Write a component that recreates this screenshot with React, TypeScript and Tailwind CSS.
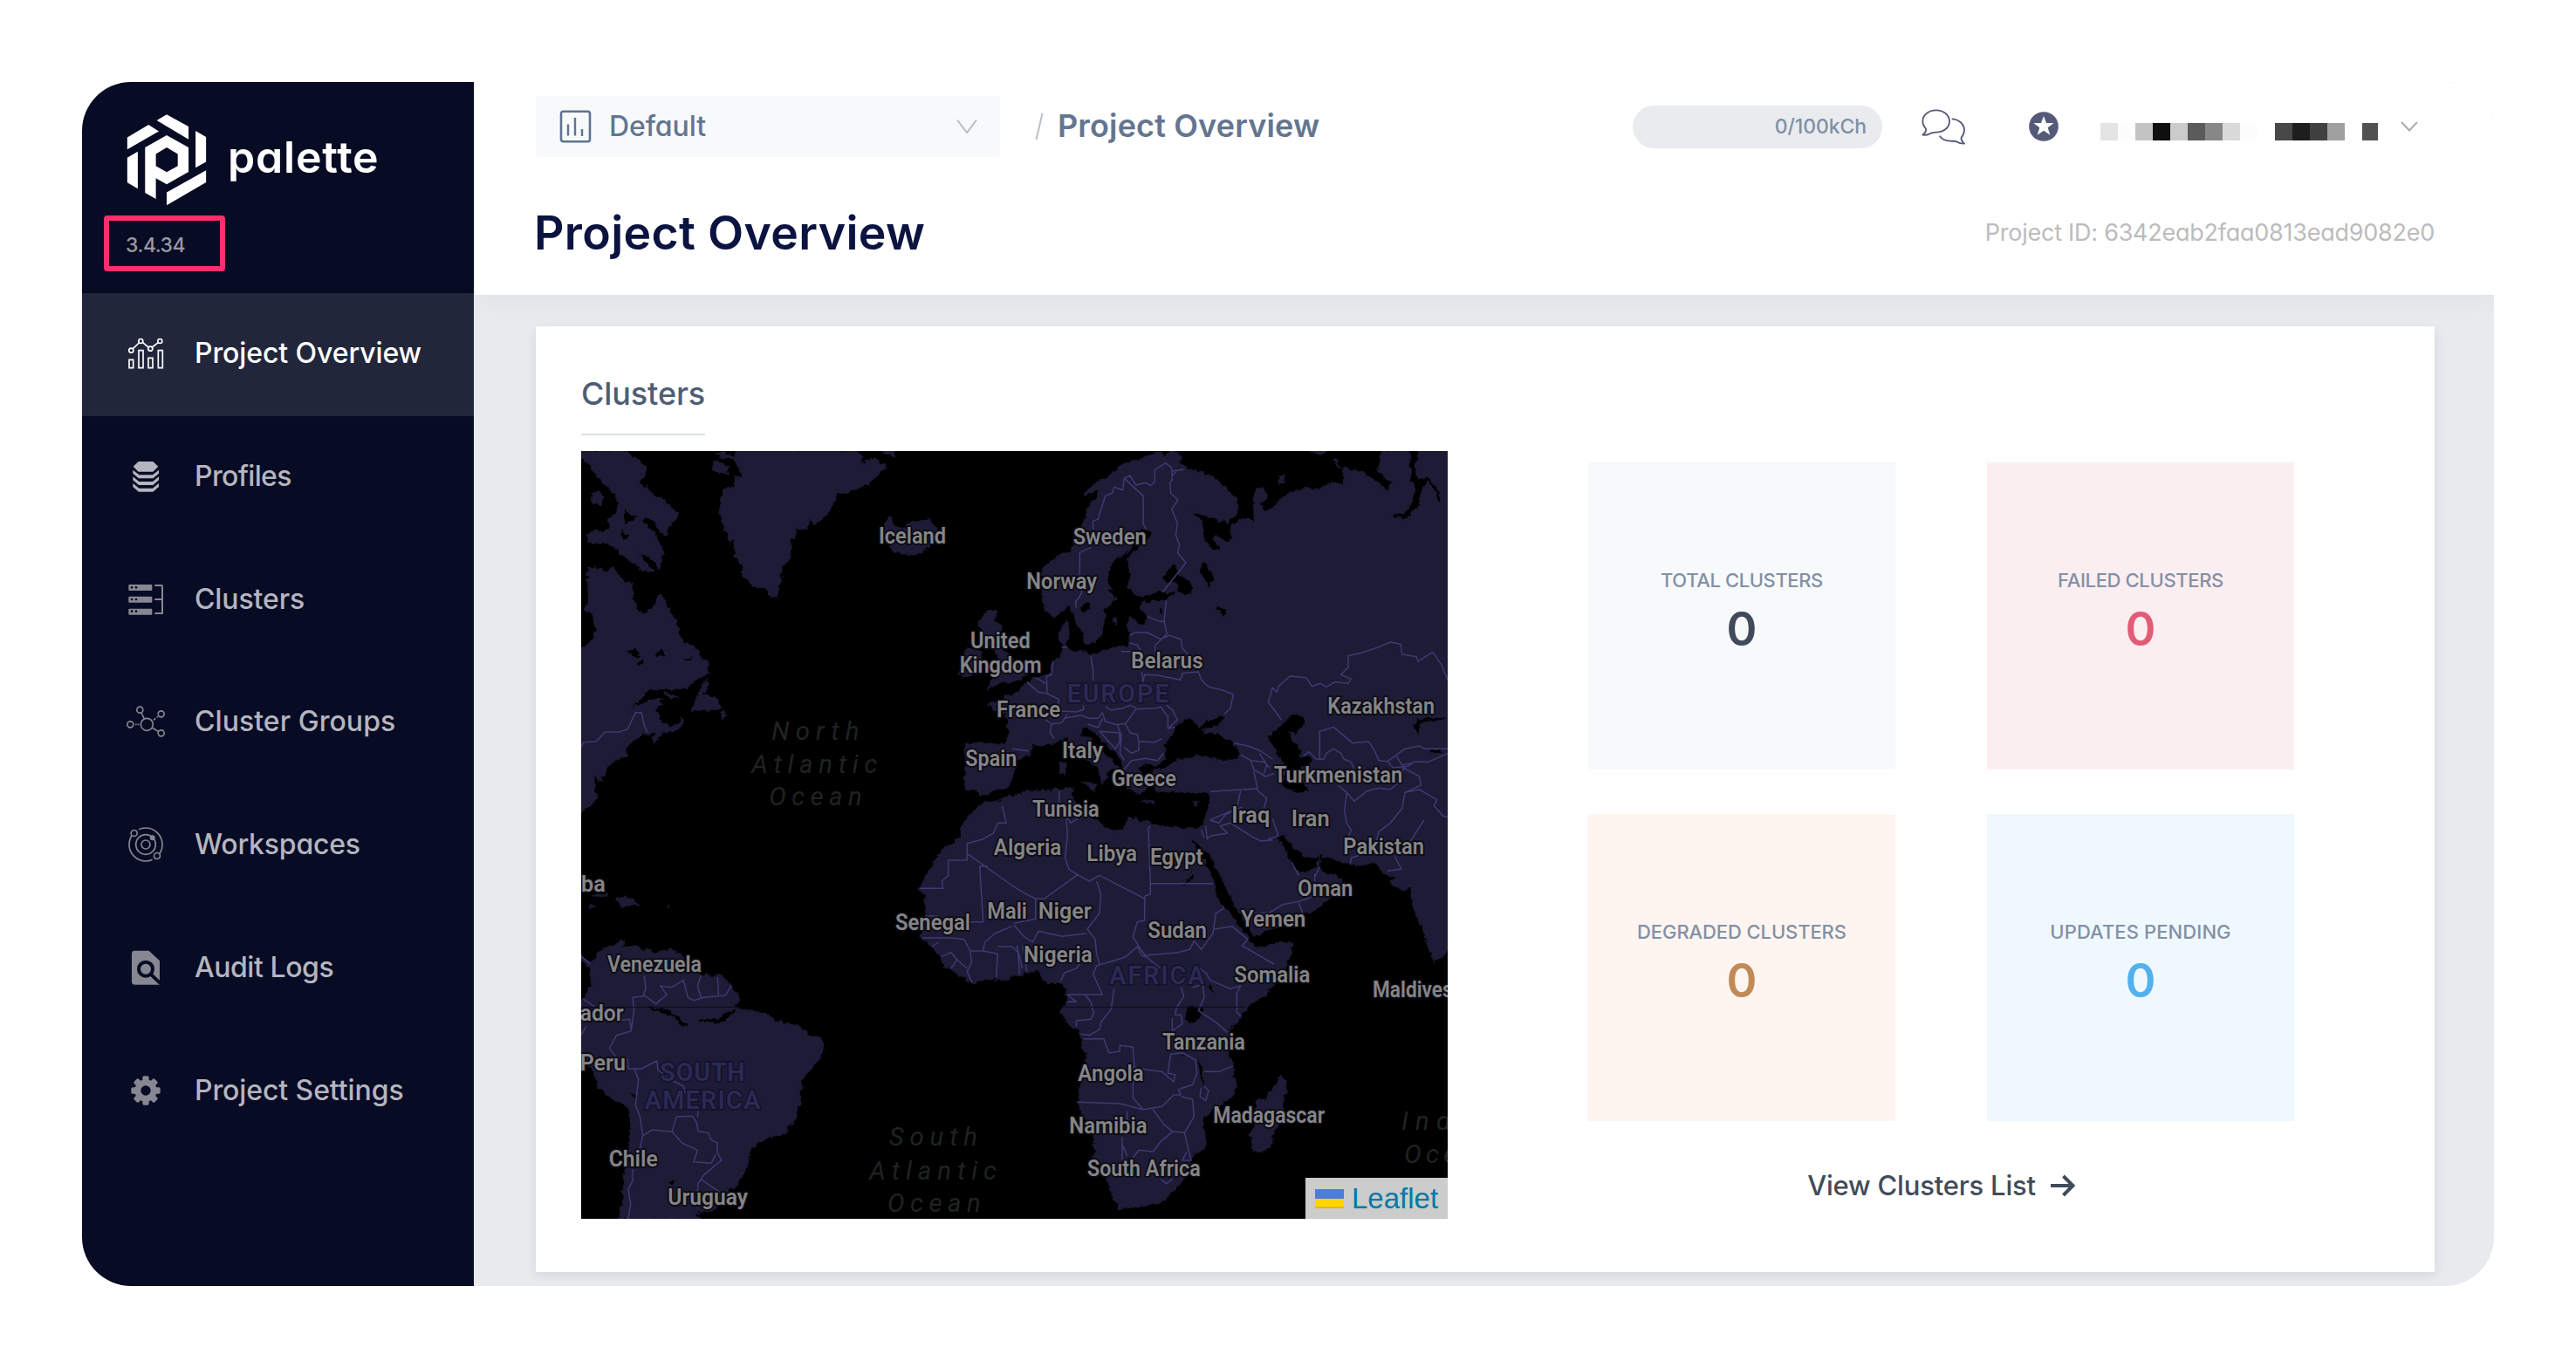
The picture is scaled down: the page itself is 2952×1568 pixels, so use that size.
import type { ReactNode } from "react";

const navIcons = {
  overview: (
    <svg viewBox="189 906 144 144" className="mb-[3px] size-12" fill="none" stroke="#fff" strokeWidth="5">
      <path d="M217 962 238 942M251 941 270 957M283 957 304 941" />
      <circle cx="211" cy="968" r="7.5" />
      <circle cx="244" cy="936" r="7.5" />
      <circle cx="277" cy="962" r="7.5" />
      <circle cx="310" cy="936" r="7.5" />
      <path d="M204 1000h14v28h-14zM237 968h15v60h-15zM270 994h15v34h-15zM304 968h15v60h-15z" />
    </svg>
  ),
  profiles: (
    <svg viewBox="189 130 144 144" className="mb-[3px] size-12" fill="#b5b5c1">
      <path d="M218 168 236 151H286L304 168 286 186H236Z" />
      <path d="M217 180 238 197H285L306 180V192L286 209H237L217 192Z" />
      <path d="M217 203 238 220H285L306 203V215L286 232H237L217 215Z" />
      <path d="M217 226 238 243H285L306 226V238L286 255H237L217 238Z" />
    </svg>
  ),
  clusters: (
    <svg viewBox="189 552 144 144" className="mb-[3px] size-12" fill="#878793">
      <rect x="202" y="573" width="81" height="21" rx="3" />
      <rect x="202" y="614" width="81" height="21" rx="3" />
      <rect x="202" y="656" width="81" height="21" rx="3" />
      <g fill="#070b24">
        <circle cx="213" cy="583" r="4" />
        <circle cx="228" cy="583" r="4" />
        <circle cx="213" cy="624" r="4" />
        <circle cx="228" cy="624" r="4" />
        <circle cx="213" cy="665" r="4" />
        <circle cx="228" cy="665" r="4" />
      </g>
      <path d="M292 576H315Q318 576 318 579V672H292M292 624H318" fill="none" stroke="#878793" strokeWidth="6" />
    </svg>
  ),
  groups: (
    <svg viewBox="189 976 144 144" className="mb-[3px] size-12" fill="none" stroke="#878793" strokeWidth="5">
      <circle cx="265" cy="1058" r="21" />
      <circle cx="241" cy="1008" r="10.5" />
      <circle cx="314" cy="1022" r="10.5" />
      <circle cx="208" cy="1058" r="10.5" />
      <circle cx="314" cy="1088" r="10.5" />
      <path d="M246 1018 256 1039M283 1070 304 1082M288 1043 295 1037M299 1034 303 1031M225 1058H230M233 1058H238" />
    </svg>
  ),
  workspaces: (
    <svg viewBox="189 197 144 144" className="mb-[3px] size-12" fill="none" stroke="#878793" strokeWidth="5">
      <circle cx="261" cy="269" r="57" />
      <circle cx="261" cy="269" r="34" />
      <circle cx="261" cy="269" r="15" />
      <path d="M229 219 236 215M291 319 284 322" stroke="#070b24" strokeWidth="9" />
      <circle cx="221" cy="230" r="10.5" fill="#070b24" />
      <circle cx="300" cy="308" r="10.5" fill="#070b24" />
      <circle cx="284" cy="246" r="9" fill="#878793" stroke="none" />
    </svg>
  ),
  audit: (
    <svg viewBox="189 619 144 144" className="mb-[3px] size-12">
      <path d="M223 633H272L309 668V750H223Q213 750 213 740V643Q213 633 223 633Z" fill="#878793" />
      <circle cx="261" cy="696" r="24" fill="none" stroke="#070b24" strokeWidth="12" />
      <path d="M278 714 312 746" stroke="#070b24" strokeWidth="12" />
    </svg>
  ),
  settings: (
    <svg viewBox="-72 -72 144 144" className="mb-[3px] size-12" fill="#878793">
      {[0, 45, 90, 135].map((a) => (
        <rect key={a} x="-11" y="-50" width="22" height="100" rx="5" transform={`rotate(${a})`} />
      ))}
      <circle r="38" />
      <circle r="17" fill="#070b24" />
    </svg>
  ),
};

const nav: { label: string; icon: ReactNode; cls: string }[] = [
  { label: "Project Overview", icon: navIcons.overview, cls: "bg-[#22263b] text-white tracking-[-0.1px]" },
  { label: "Profiles", icon: navIcons.profiles, cls: "text-[#b5b5bf] tracking-[-0.65px]" },
  { label: "Clusters", icon: navIcons.clusters, cls: "text-[#b5b5bf] tracking-[-0.1px]" },
  { label: "Cluster Groups", icon: navIcons.groups, cls: "text-[#b5b5bf] tracking-[0.05px]" },
  { label: "Workspaces", icon: navIcons.workspaces, cls: "text-[#b5b5bf] tracking-[-0.2px]" },
  { label: "Audit Logs", icon: navIcons.audit, cls: "text-[#b5b5bf] tracking-[-0.45px]" },
  { label: "Project Settings", icon: navIcons.settings, cls: "text-[#b5b5bf] tracking-[-0.1px]" },
];

function Logo() {
  return (
    <svg viewBox="190 150 280 320" className="h-[107px] w-[94px]" fill="#fff">
      <path d="M296 174 330 154 405 195V239ZM195 232 268 189 303 211 195 273ZM195 302 231 281V408L195 387ZM429 210 465 231V316L429 336ZM330 421 465 345V386L330 465Z" />
      <path fillRule="evenodd" d="M256 267 330 225 405 267V350L330 393 293 372V443L256 422ZM293 289V330L330 351 368 330V289L330 267Z" />
    </svg>
  );
}

function Sidebar() {
  return (
    <aside className="flex w-[449px] flex-col bg-[#070b24]">
      <div className="h-[242px] pt-9 pl-[50px]">
        <div className="flex items-center">
          <Logo />
          <span className="pb-[8px] pl-[23px] text-[50px] leading-none font-semibold tracking-[0.8px] text-white">palette</span>
        </div>
        <div className="mt-[10px] ml-[-25px] flex h-16 w-[139px] items-center rounded-[4px] border-6 border-[#ff2e6c] pt-[5px] pl-[19px] text-[23px] font-medium tracking-[-0.5px] text-[#9898a4]">
          3.4.34
        </div>
      </div>
      <nav>
        {nav.map((n) => (
          <div key={n.label} className={`flex h-[140.85px] items-center pl-[49px] text-[32px] font-[450] ${n.cls}`}>
            {n.icon}
            <span className="pb-[3px] pl-[32px]">{n.label}</span>
          </div>
        ))}
      </nav>
    </aside>
  );
}

const mosaic = [
  "bg-[#e4e4e4]", "bg-[#fcfcfc]", "bg-[#c4c4c4]", "bg-[#0f0f0f]", "bg-[#cbcbcb]", "bg-[#5b5b5b]", "bg-[#878787]", "bg-[#dadada]",
  "bg-[#fcfcfc]", "bg-white", "bg-[#484848]", "bg-[#1e1e1e]", "bg-[#404040]", "bg-[#9f9f9f]", "bg-white", "bg-[#515151]",
];

function Header() {
  return (
    <header className="relative z-10 h-[244px] bg-white pt-4 pr-[68px] pl-[71px] shadow-[0_6px_30px_rgba(20,30,60,0.04)]">
      <div className="flex h-[70px] items-center">
        <div className="flex h-full w-[532px] items-center rounded-[4px] bg-[#f7f9fb] pr-[26px] pl-[27px]">
          <svg viewBox="0 0 37 38" className="h-[38px] w-[37px]" fill="none" stroke="#5f7391" strokeWidth="2.6">
            <rect x="2" y="1.8" width="33" height="34.4" rx="2.5" />
            <path d="M10 16.5V29.5M18 9V29.5M26 22V30" strokeWidth="2.4" />
          </svg>
          <span className="pb-[1px] pl-[20px] text-[32px] font-[450] tracking-[-0.1px] text-[#64758f]">Default</span>
          <svg viewBox="0 0 24 18" className="ml-auto h-[18px] w-6" fill="none" stroke="#b9bdc2" strokeWidth="2">
            <path d="M1 1.5 12 16 23 1.5" />
          </svg>
        </div>
        <svg viewBox="0 0 10 32" className="ml-[40px] h-8 w-[10px]" stroke="#b6bfca" strokeWidth="2">
          <path d="M1.5 31 8.5 1" />
        </svg>
        <span className="pb-[2px] pl-[16px] text-[36px] font-[580] tracking-[0.15px] text-[#64758f]">Project Overview</span>
        <div className="ml-auto flex h-[49px] w-[286px] items-center justify-end rounded-full bg-[#e9ebef] pr-[18px] text-[23px] font-medium tracking-[-0.1px] text-[#8090a5]">
          0/100kCh
        </div>
        <svg viewBox="127 70 150 126" className="ml-[45px] h-[42px] w-[50px]" fill="none" stroke="#565a79" strokeWidth="5.5" strokeLinejoin="round">
          <path d="M131 162C140 155 144 149 142 140 134 132 131 124 131 115 131 93 151 77 177 77S223 93 223 115 203 153 177 153C168 153 160 155 155 158 147 162 138 163 131 162Z" />
          <path d="M231 107C255 108 274 124 274 146 274 157 270 163 264 171 262 180 267 186 274 192 264 192 256 191 250 186 240 182 232 184 225 183 208 182 196 175 189 165" />
        </svg>
        <svg viewBox="-51 -51 102 102" className="ml-[73px] size-[34px]">
          <circle r="50.5" fill="#565a79" />
          <path d="M0-36 9-12H35L14 4 22 29 0 14-22 29-14 4-35-12H-9Z" fill="#fff" />
        </svg>
        <div className="mt-[11px] ml-[48px] flex h-5">
          {mosaic.map((c, i) => (
            <span key={i} className={`h-5 w-5 last:w-[18px] ${c}`} />
          ))}
        </div>
        <svg viewBox="0 0 20 12" className="mr-[19px] ml-[26px] h-3 w-5" fill="none" stroke="#a9adb3" strokeWidth="2">
          <path d="M1 1 10 10.5 19 1" />
        </svg>
      </div>
      <div className="flex h-[158px] items-center justify-between pt-[17px]">
        <h1 className="ml-[-2px] text-[53.5px] font-[580] tracking-[0.35px] text-[#0b1340]">Project Overview</h1>
        <span className="text-[27px] tracking-[-0.25px] text-[#bcbcbc]">Project ID: 6342eab2faa0813ead9082e0</span>
      </div>
    </header>
  );
}

// Map drawing units: one third of a CSS pixel, origin at (18, 21).
const land = [
  "M18 21H175L200 45 225 60 240 75 235 110 215 125 245 150 270 175 300 190 345 235V250L325 275 305 308 280 280 262 255 235 248 230 265 262 300 285 330 298 370 290 405 285 425 265 395 235 375 212 368 230 395 265 435 235 430 200 405 165 385 135 350 105 335 60 340 40 330 50 300 120 295 110 262 140 230 150 205 130 165 95 130 60 85 18 38Z",
  "M60 165 75 158 92 175 85 205 60 200Z",
  "M40 425H70L105 433 122 423 150 450 165 475 190 480 195 530 215 570 240 580 262 565 275 540 288 510 310 545 325 580 345 600 350 650 380 685 420 705 430 735 455 745V785L405 810 380 838H250L225 870 195 900 180 925 205 900 250 880 290 872 297 890 265 908 285 925 290 955 330 970 355 955 362 940 370 960 345 980 300 990 272 1020 262 1010 280 990H250L185 1020 172 1045 175 1065 130 1085 110 1105 100 1135H80L90 1160 65 1130V1180L72 1215 40 1250 18 1262V700L45 685 65 660 70 620 55 585 32 560 45 540Z",
  "M450 808 452 830 435 860 490 870 498 900 480 912H397L415 880 432 835Z",
  "M498 920H512L505 938Z",
  "M303 852 345 868 335 872Z",
  "M550 21H970L990 40 975 65 1030 50 1070 75 1010 130 930 165 900 160 895 175 862 240 820 275 805 250 790 290H755L750 320H735L740 370 720 410 700 415 705 450 690 520H675L650 490 610 485 580 450 570 410 545 380V345L550 325 530 330 520 300 500 255 497 190 510 155 545 145 550 105 572 112 560 75 545 50Z",
  "M485 30 530 30 545 50 510 45Z",
  "M475 55 525 75 520 100 475 85Z",
  "M1055 21H1095V40L1075 32Z",
  "M1062 280 1080 252 1100 285 1130 290 1150 265H1190L1210 252 1235 285 1245 320 1215 350 1160 378 1110 370 1080 355 1095 335 1060 300Z",
  "M1415 572 1447 575 1435 605 1465 620 1455 650 1440 665 1465 700 1490 720 1510 750 1540 770 1545 790 1500 815 1460 815 1410 840 1430 815 1460 790 1440 780 1455 750 1440 700 1400 660 1395 630 1380 610Z",
  "M1350 700 1390 710 1395 750 1375 785 1330 797 1315 785 1335 760 1330 735Z",
  // Eurasia and Africa, clockwise from southern Norway
  "M1605 560 1605 500 1630 480 1600 440 1620 410 1660 380 1700 370 1715 320 1745 270 1760 210 1790 180 1800 155 1750 168 1785 130 1830 110 1870 75 1940 48 2000 25 2020 40 2050 22 2080 40 2065 60 2100 80 2190 110 2240 155 2270 185 2275 230 2240 265 2200 255 2140 235 2112 222 2150 265 2155 320 2180 350 2205 367 2220 350 2190 325 2200 310 2235 335 2260 320 2250 285 2290 250 2335 260 2330 200 2335 150 2370 155 2375 180 2345 205 2370 230 2395 225 2410 195 2460 165 2500 150 2560 150 2600 130 2640 140 2640 80 2700 95 2760 130 2790 160 2800 130 2760 90 2770 21H2865V120L2885 145 2870 200 2850 235 2800 235 2810 250 2855 255 2900 210 2910 150 2930 130 2955 160 2960 190 2980 195 2960 140 2930 110 2895 115 2890 70 2900 21H3000V1730L2980 1760 2955 1775 2940 1750 2920 1690 2900 1640 2880 1590 2870 1510 2850 1530 2820 1520 2800 1500 2820 1490 2780 1470 2745 1435 2700 1445 2660 1440 2610 1430 2560 1405 2550 1420 2500 1410 2470 1380 2430 1340 2405 1350 2430 1380 2450 1420 2465 1460 2500 1470 2540 1460 2555 1425 2560 1470 2610 1480 2640 1510 2585 1560 2550 1595 2500 1610 2460 1640 2390 1665 2330 1690 2315 1660 2280 1610 2240 1530 2210 1470 2180 1410 2155 1385 2112 1348 2125 1380 2150 1415 2170 1460 2195 1510 2205 1570 2240 1600 2270 1645 2310 1695 2340 1735 2380 1720 2460 1710V1740L2430 1820 2370 1890 2310 1930 2280 1975 2245 2010 2240 2090 2255 2120 2260 2160 2268 2210 2255 2240 2200 2275 2150 2320 2165 2380 2160 2420 2120 2440 2090 2520 2060 2560 2010 2605 1930 2620 1870 2625 1845 2580 1830 2530 1785 2450 1780 2370 1725 2270 1730 2220 1750 2150 1755 2100 1740 2060 1730 2020 1690 1985 1670 1950 1685 1920 1690 1870 1665 1845 1620 1850 1590 1810 1510 1820 1480 1840 1420 1835 1360 1850 1300 1810 1265 1790 1255 1765 1225 1725 1190 1695 1185 1665 1205 1610 1200 1545 1180 1530 1205 1480 1230 1440 1265 1390 1325 1350V1320L1340 1290 1390 1240 1405 1228 1440 1230 1500 1205 1570 1190 1650 1185 1710 1180 1700 1210 1740 1270 1790 1290 1830 1325 1880 1330 1900 1280 1960 1300 2010 1310 2090 1320 2140 1320 2160 1300 2180 1230V1190L2140 1195 2070 1190 2000 1190 1980 1150 1990 1120 2040 1110 2050 1090 2090 1080 2150 1070 2220 1085 2270 1085 2285 1060 2260 1020 2200 990 2155 990 2165 975 2210 965 2240 925 2200 938 2150 960 2140 975 2125 945 2100 940 2065 965 2045 1000 2020 1040 2025 1080 2000 1100 1960 1095 1930 1110 1950 1140 1930 1150 1960 1180 1940 1200 1900 1180 1880 1110 1870 1070 1830 1040 1800 1000 1760 970H1740L1735 1005 1765 1010 1790 1040 1810 1060 1845 1085 1865 1120 1845 1112 1828 1115 1820 1150 1810 1160 1805 1125 1770 1090 1735 1060 1700 1025 1685 1005 1650 1020 1610 1030 1565 1030 1560 1060 1520 1080 1500 1120V1150L1480 1180 1440 1190 1400 1205 1375 1185 1340 1180 1335 1140 1345 1100 1335 1045 1350 1025 1475 1030 1490 1010 1487 960 1480 925 1430 905 1420 890 1475 880 1475 860 1500 868 1540 830 1580 800 1630 790 1640 745 1665 730 1672 700 1660 650 1690 605 1695 650 1680 690 1705 715 1740 710 1770 720 1800 715 1865 690 1900 695 1905 650 1895 620 1910 590 1935 620 1960 620 1965 590 1940 560 1950 545 2020 530 2060 515 2070 505 2000 505 1935 520 1900 490 1905 450 1900 395 1940 350 1970 325 1980 300 1950 285 1930 300 1915 345 1890 370 1845 400 1825 440 1830 490 1855 530 1820 560 1815 600 1805 650 1770 685 1750 680 1745 650 1715 600 1700 555 1690 550 1665 580 1640 588Z",
  "M2415 110 2435 100V125L2420 130ZM2605 50 2630 75 2618 72ZM2525 21H2580L2560 32Z",
  "M1742 1160 1790 1165 1785 1190ZM1665 1092 1685 1100 1680 1135 1665 1130ZM2120 1230 2145 1225 2130 1240ZM1945 1225H1985V1232ZM1848 600 1858 595 1850 620Z",
  "M2425 2168 2442 2200 2445 2230 2430 2240 2425 2290 2405 2350 2385 2410 2360 2430 2330 2425 2320 2370 2340 2320 2335 2260 2380 2240 2405 2200Z",
  "M165 1705 150 1760 165 1730 200 1722 230 1735 280 1748 300 1738 340 1740 365 1760 400 1800 430 1825H500L535 1860 562 1905 545 1940 600 1945 660 1960 680 1980 760 1995 800 2030 842 2035 850 2070 840 2105 800 2150 775 2185 770 2250 755 2310 720 2365 650 2385 600 2420 590 2480 560 2535 500 2590 480 2632 400 2640 430 2661H145L165 2590V2500L185 2420 190 2320 185 2280 100 2230 75 2200 60 2150 18 2120V1920L30 1900 55 1860 50 1800 18 1770V1758L55 1780 85 1740 120 1725Z",
  "M140 1558H190L215 1580 155 1588ZM52 1546H105V1550ZM40 1586H65V1589ZM318 1585H323V1590H318Z",
].join("");

const water = [
  "M165 220 210 250 165 275ZM155 290 182 312 165 335ZM178 712 205 698 222 735 190 725ZM270 725 290 700 318 730ZM375 735 402 730 380 745ZM217 745H229V757H217Z",
  "M2015 455 2060 410 2068 440 2090 455 2122 490 2110 515 2075 505 2060 470 2030 475ZM2150 405 2170 410 2190 460 2175 487 2150 440ZM2205 550 2235 575 2230 588 2203 570ZM1735 560 1768 538 1765 565 1740 578Z",
  "M2005 560H2018V580H2010Z",
  "M2380 1000 2430 960 2460 930 2505 935V960L2475 995 2450 985 2465 1020 2495 1050 2490 1070 2530 1075 2530 1095 2490 1110 2500 1160 2520 1190 2480 1193 2440 1180 2425 1160 2445 1120 2430 1090 2400 1040Z",
  "M2880 960 2905 940 2980 938 2990 942 2905 955 2895 990ZM2930 1050 2970 1045 2975 1058 2940 1060Z",
  "M2100 1935 2140 1930 2155 1940 2135 1980 2105 1990 2095 1970ZM2140 2110 2155 2140 2150 2170 2165 2205 2150 2190 2142 2150ZM2178 1850 2195 1885 2182 1875ZM2120 1470 2125 1490 2090 1515 2105 1490Z",
  "M245 1935 310 1940 355 1970 385 2000 360 1992 330 1965 270 1945ZM425 1975 490 1970 530 1945 550 1945 500 1985 430 1985ZM185 2225 210 2240 205 2250ZM320 2530 340 2530 330 2548ZM2075 2095H2090V2098Z",
].join("");

const borders = [
  "M18 1041 25 1022 70 1020 100 987H150L178 977 205 920H225L235 965 245 988",
  // Scandinavia
  "M1720 560 1718 540 1738 510 1732 450V370L1770 353M1778 290V262L1795 255 1820 175 1845 165 1850 145 1880 155 1885 115 1905 105 1925 138 1960 130 1975 140 1990 125V85L2028 62 2048 80 2050 120 2042 130 2045 165 2070 190 2048 220 2068 270 2062 310 2075 345 2068 370 2097 405 2018 505M1885 115 1950 175V270L1960 290M2048 90 2090 85M2050 105 2065 90",
  // Eastern and central Europe
  "M2030 535 2022 605 2032 650 1990 690 1992 710M1965 590 2000 605 2025 608M1905 655 1920 645H1965L2010 668 2040 655 2080 668 2085 700 2105 720M1905 682 1930 688 1940 705M1875 710H1912M1670 695H1690M1770 725 1778 775V810M1640 745 1635 790 1618 795 1620 855 1660 875 1655 905M1550 815 1590 850 1620 855M1580 800 1615 820M1945 780 1950 812 1955 790 2000 792 2078 808 2085 785 2140 780 2150 808 2175 832 2220 842 2260 858 2250 905 2230 925M1950 812 1945 830",
  "M1670 915 1720 918 1745 910 1745 895M1680 940 1735 930 1765 940 1795 940 1810 920M1820 900 1840 912 1880 905 1905 895 1925 905M1810 920 1820 950 1860 962 1890 958 1910 930 1925 908 1995 905 2010 900 2035 935 2035 975 2060 970M2030 895 2050 910 2068 945 2035 975M1760 960 1795 972 1810 940M1615 945 1635 960 1630 990 1645 1010M1635 960 1670 955 1690 925M1500 1045 1555 1052",
  "M1800 985 1868 990 1870 1020 1855 1045 1800 985M1862 965 1875 1000 1870 1060 1885 1085M1890 960 1905 990 1930 995 1935 1020 1990 1022 2015 1010M1935 1020V1050L1910 1060 1885 1040M1885 1115 1910 1085 1960 1078 2000 1085 2020 1060",
  // Caucasus and central Asia
  "M2262 1025 2310 1035 2350 1050 2395 1080M2285 1065 2320 1085 2365 1090 2385 1110M2320 1085 2330 1115 2370 1140 2400 1130M2350 1060 2375 1100 2365 1130M2330 1120 2345 1190 2375 1215 2365 1250M2180 1192 2290 1185 2345 1182M2285 1190 2272 1250 2180 1290",
  "M2425 945 2400 910 2380 885 2395 835 2410 850 2415 830 2455 795 2510 800 2530 830 2560 820 2580 832 2610 815 2655 820 2665 805 2630 790 2655 765V725L2700 715 2760 695 2800 678 2835 685 2840 720 2890 728 2895 745 2945 712 2975 755 2998 810",
  "M2500 1070 2520 1055 2545 1080H2572L2580 1060 2605 1045 2630 1060 2640 1080 2665 1090 2675 1115M2557 1080V985L2605 970 2670 1025 2725 1020 2745 1050 2760 1085 2790 1088 2850 1045 2900 1035 2920 1045 3000 1045M2790 1088 2810 1110 2860 1105 2880 1090 2930 1090 3000 1060M2820 1070 2840 1100 2870 1095M2620 1170 2650 1195 2675 1225 2720 1190 2760 1180 2800 1185 2830 1160 2845 1110 2900 1140 2905 1170 2850 1195 2840 1250 2800 1300 2760 1330 2750 1370M2650 1195 2642 1260 2650 1300 2665 1325 2650 1360M2850 1195 2900 1185 2960 1220 2950 1240 2980 1275 3000 1280M2915 1290 2880 1345 2865 1370M2662 1440 2665 1420 2690 1412M2815 1415 2838 1458 2790 1465",
  // Middle East
  "M2165 1310 2170 1355 2180 1345 2240 1335 2215 1310 2250 1300 2330 1350 2355 1362 2395 1358M2180 1290 2210 1300 2235 1270 2290 1245M2395 1285 2415 1345 2380 1355M2150 1325 2160 1350M2460 1435 2485 1480M2540 1485 2558 1450M2540 1475V1500M2335 1610 2385 1608 2430 1580 2485 1570 2530 1555M2485 1575 2500 1615",
  // North and west Africa
  "M1662 1190 1660 1240 1685 1270 1700 1300 1725 1285M1685 1270 1690 1340 1682 1420 1695 1460 1725 1478 1765 1500 1800 1480 1955 1560 1957 1550 1975 1545V1505L1968 1320M1968 1320 1975 1310M1975 1508H2190M1465 1240 1480 1300 1450 1300 1435 1335 1400 1355 1345 1370V1428H1280V1480L1258 1500 1262 1525H1182M1345 1405 1500 1515 1540 1540 1580 1560 1610 1560 1725 1478M1415 1448H1388L1400 1640H1350",
  "M1955 1560V1635L1930 1640 1915 1690 1935 1725 1960 1760 1945 1755 1930 1725 1890 1760 1860 1770 1790 1790 1778 1820 1810 1890 1790 1890 1690 1890M1790 1500 1805 1545 1800 1610 1758 1665 1785 1700 1790 1750 1800 1785M1580 1560V1630L1505 1645M1505 1650 1540 1690 1570 1710 1590 1672 1670 1690 1755 1680M1665 1845 1680 1815 1720 1800 1770 1735",
  "M1400 1740 1405 1710 1440 1680 1500 1655M1190 1695H1290L1335 1700 1355 1740 1400 1740 1450 1750 1445 1830M1355 1740 1360 1780 1345 1810 1362 1850M1255 1760 1290 1745 1310 1770 1290 1800M1310 1770 1345 1800M1450 1725H1500L1520 1745 1525 1820M1200 1620H1245M1225 1725 1245 1710M1535 1720 1550 1810M1515 1720 1535 1800",
  // Central and eastern Africa
  "M2230 1592 2200 1610 2190 1680 2150 1735 2125 1705 2110 1735 2070 1745 1960 1755M2195 1665 2255 1655 2310 1700 2290 1722 2330 1745 2400 1785M1960 1760 2010 1800M2125 1785 2165 1815 2180 1840 2250 1870 2285 1860 2272 1885V1950L2285 1965M2120 1865 2155 1855 2160 1900 2140 1945 2200 1985 2240 2020M2080 1865 2090 1895 2065 1935 2060 1960 2080 1960 2085 1990 2050 2015 2050 1970",
  "M1690 1890 1720 1915H1690M1750 1890 1770 1915 1780 1955 1770 1975 1720 1980V2000M1850 1870 1840 1940 1805 1985 1800 2010 1765 2030 1735 2025M1745 2042H1815L1832 2090 1870 2085V2065L1915 2070 1920 2140 1960 2148 2015 2155 2055 2190 2060 2165 2035 2160 2045 2095 2085 2090 2130 2115 2135 2160 2120 2200 2075 2215M1915 2140V2245L1950 2285M1722 2260 1870 2265 1950 2285 2015 2275 2055 2235 2080 2235 2070 2215M1878 2460V2380M1895 2290V2370H1880M1980 2280 2020 2335 2050 2360 2092 2365 2125 2310 2120 2250 2080 2240M1915 2450 1935 2425 1985 2430 2010 2395 2050 2362M2092 2365 2105 2420 2115 2460 2085 2460 2100 2430M2160 2155 2210 2155 2260 2135M2150 2210 2145 2240 2165 2255 2175 2220 2160 2205M2010 2525 2030 2540 2050 2525M1880 2410 1895 2445",
  // South America
  "M235 1825 240 1870 232 1890 275 1922 312 1890 290 1860 330 1865 370 1840 385 1900 405 1910 440 1900 515 1892 535 1858M430 1825 418 1860 430 1900M487 1830 490 1890M235 1895 195 1900 200 1940 190 2015 140 2030 115 2075 138 2105M25 1905 65 1932M18 2030 35 2000M155 1978 185 1975 190 2010M178 2110 180 2145H225L278 2118 282 2150 340 2190 370 2205 375 2230M200 2145 215 2180 205 2270 220 2310 230 2375 262 2355 330 2362 345 2310 400 2308 415 2330 420 2360 455 2365 465 2390 487 2400 485 2430 500 2460 440 2510 420 2540 418 2570M330 2362 365 2400 418 2425 405 2465 465 2470 480 2440M430 2525 495 2570M420 2290 418 2310M230 2375 220 2420M195 2490V2530L180 2560 188 2610 180 2661M18 1758 50 1785",
].join("");

const places: [string, number, number, number][] = [
  ["Iceland", 1045, 1268, 340], ["Sweden", 1713, 1957, 342], ["Norway", 1553, 1787, 495], ["United", 1360, 1558, 700],
  ["Kingdom", 1323, 1597, 783], ["France", 1450, 1662, 935], ["Spain", 1343, 1512, 1105], ["Belarus", 1912, 2152, 767],
  ["Kazakhstan", 2588, 2948, 925], ["Italy", 1675, 1808, 1077], ["Greece", 1845, 2060, 1172], ["Turkmenistan", 2403, 2838, 1160],
  ["Tunisia", 1573, 1795, 1277], ["Iraq", 2258, 2382, 1300], ["Iran", 2463, 2587, 1312], ["Algeria", 1440, 1665, 1410],
  ["Libya", 1760, 1925, 1430], ["Egypt", 1978, 2152, 1442], ["Pakistan", 2642, 2912, 1408], ["Oman", 2485, 2667, 1550],
  ["Yemen", 2290, 2505, 1655], ["Mali", 1418, 1547, 1628], ["Niger", 1593, 1768, 1628], ["Senegal", 1102, 1352, 1668],
  ["Sudan", 1970, 2165, 1695], ["Nigeria", 1543, 1772, 1778], ["Somalia", 2267, 2520, 1848], ["Maldives", 2743, 3010, 1898],
  ["Tanzania", 2020, 2297, 2080], ["Angola", 1730, 1948, 2188], ["Namibia", 1700, 1960, 2367], ["Madagascar", 2195, 2570, 2330],
  ["South Africa", 1762, 2143, 2515], ["ba", 22, 97, 1535], ["Venezuela", 112, 428, 1813], ["ador", 18, 160, 1980],
  ["Peru", 18, 167, 2150], ["Chile", 117, 277, 2482], ["Uruguay", 320, 587, 2612],
];

const continents: [string, number, number, number][] = [
  ["EUROPE", 1692, 2032, 885], ["AFRICA", 1838, 2155, 1855], ["SOUTH", 293, 575, 2188], ["AMERICA", 240, 628, 2283],
];

const oceans: [string, number, number, number][] = [
  ["North", 677, 965, 1015], ["Atlantic", 608, 1028, 1128], ["Ocean", 668, 975, 1240],
  ["South", 1080, 1372, 2410], ["Atlantic", 1013, 1438, 2525], ["Ocean", 1075, 1383, 2638],
  ["Ind", 2842, 2998, 2355], ["Oce", 2852, 3020, 2470],
];

function WorldMap() {
  return (
    <div className="relative h-[880px] w-[993px] overflow-hidden bg-black">
      <svg viewBox="18 21 2979 2640" className="size-full">
        <defs>
          <filter id="coast" x="0" y="0" width="100%" height="100%" colorInterpolationFilters="sRGB">
            <feTurbulence type="fractalNoise" baseFrequency="0.05" numOctaves="3" seed="4" />
            <feDisplacementMap in="SourceGraphic" scale="22" xChannelSelector="R" yChannelSelector="G" />
          </filter>
        </defs>
        <g filter="url(#coast)">
          <path d="M0 0H3020V2680H0Z" fill="#000" />
          <path d={land} fill="#1e1b36" stroke="#1e1b36" strokeWidth="5" />
          <path d={water} fill="#000" />
        </g>
        <path d={borders} fill="none" stroke="#3d3a74" strokeWidth="4.5" strokeLinejoin="round" />
        <path d="M18 1933H560M1670 1933H2300" stroke="#0d0c1c" strokeWidth="3" />
        <g fontFamily="Roboto" fontSize="86" fontWeight="600" fill="#2b2955" stroke="#13122a" strokeWidth="10" paintOrder="stroke">
          {continents.map(([t, a, b, y]) => (
            <text key={t} x={a - 4} y={y} textLength={b - a + 10}>{t}</text>
          ))}
        </g>
        <g fontFamily="Roboto" fontSize="88" fontStyle="italic" fill="#1f2323">
          {oceans.map(([t, a, b, y]) => (
            <text key={t + a} x={a - 4} y={y} textLength={b - a + 12}>{t}</text>
          ))}
        </g>
        <g fontFamily="Roboto" fontSize="76" fontWeight="600" fill="#858585" stroke="#0b0a14" strokeWidth="11" strokeLinejoin="round" paintOrder="stroke">
          {places.map(([t, a, b, y]) => (
            <text key={t} x={a - 4} y={y} textLength={b - a + 8} lengthAdjust="spacingAndGlyphs">{t}</text>
          ))}
        </g>
      </svg>
      <div className="absolute right-0 bottom-0 flex h-[47px] w-[163px] items-center bg-[#cccccc] pl-[11px] font-['Liberation_Sans',sans-serif]">
        <span className="flex h-[22px] w-[33px] flex-col">
          <span className="h-[11px] bg-[#4c7be1]" />
          <span className="h-[9px] bg-[#ffd500]" />
          <span className="h-[2px] bg-[#e0bc00]" />
        </span>
        <span className="pl-[9px] text-[33px] leading-none text-[#0078a8]">Leaflet</span>
      </div>
    </div>
  );
}

const tiles = [
  { label: "TOTAL CLUSTERS", bg: "bg-[#f7f9fb]", num: "text-[#404a5b]", track: "tracking-[-0.4px]" },
  { label: "FAILED CLUSTERS", bg: "bg-[#fbeef1]", num: "text-[#e25c78]", track: "tracking-[-0.35px]" },
  { label: "DEGRADED CLUSTERS", bg: "bg-[#fef5f0]", num: "text-[#c28a56]", track: "tracking-[-0.1px]" },
  { label: "UPDATES PENDING", bg: "bg-[#eff8ff]", num: "text-[#52b1ee]", track: "tracking-[0.1px]" },
];

export default function App() {
  return (
    <div className="h-[1568px] w-[2952px] bg-white p-[94px] font-[Inter,sans-serif] [font-feature-settings:'cv11','calt'_0]">
      <div className="flex h-[1380px] w-[2764px] overflow-hidden rounded-[56px]">
        <Sidebar />
        <div className="flex-1 bg-[#e9eaee]">
          <Header />
          <section className="mt-9 ml-[71px] flex h-[1084px] w-[2176px] bg-white pl-[52px] shadow-[0_4px_12px_rgba(20,20,50,0.09)]">
            <div className="pt-[52px]">
              <h2 className="h-[73px] w-[142px] border-b-2 border-[#d9dfe6] text-[36px] leading-[50px] font-[450] tracking-[-0.1px] whitespace-nowrap text-[#4f5d73]">
                Clusters
              </h2>
              <div className="pt-[18px]">
                <WorldMap />
              </div>
            </div>
            <div className="ml-[161px] w-[809px] pt-[156px]">
              <div className="grid grid-cols-[352px_352px] gap-x-[105px] gap-y-[51px]">
                {tiles.map((t) => (
                  <div key={t.label} className={`flex h-[352px] flex-col items-center pt-[119px] ${t.bg}`}>
                    <span className={`text-[22px] leading-8 font-[450] text-[#8390a5] ${t.track}`}>{t.label}</span>
                    <span className={`mt-[10px] text-[53px] leading-[60px] font-[620] ${t.num}`}>0</span>
                  </div>
                ))}
              </div>
              <a className="mt-[49px] flex h-[50px] items-center justify-center text-[31px] font-[450] tracking-[-0.2px] text-[#414b5a]">
                View Clusters List
                <svg viewBox="0 0 28 26" className="ml-[17px] h-[26px] w-7" fill="none" stroke="#414b5a" strokeWidth="4">
                  <path d="M0 13H25M14.5 2 25.5 13 14.5 24" />
                </svg>
              </a>
            </div>
          </section>
        </div>
      </div>
    </div>
  );
}
